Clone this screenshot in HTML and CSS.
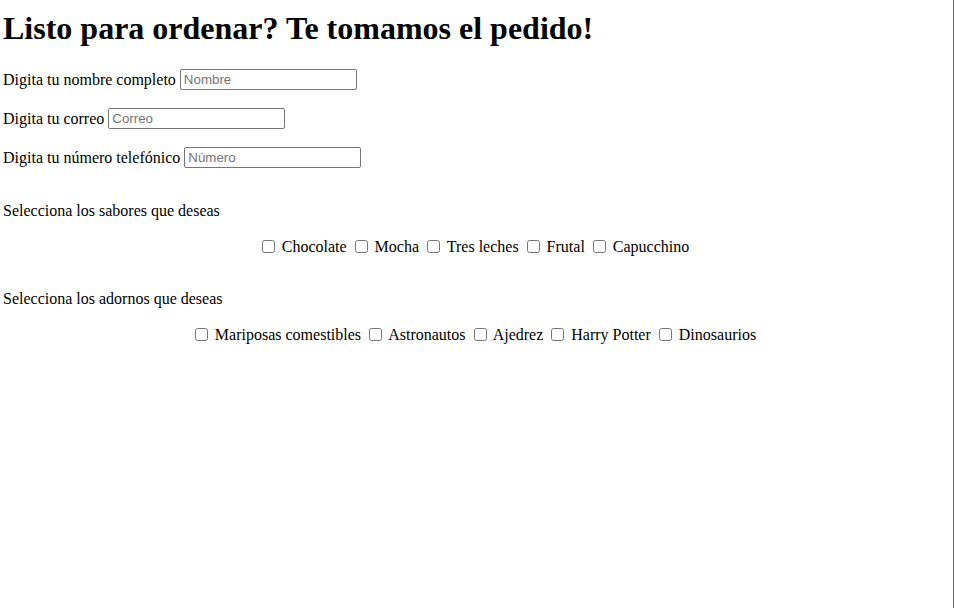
FILE: index.html
```html
<!DOCTYPE html>
<html lang="es">
<head>
<meta charset="utf-8">
<title>Pedido</title>
<link rel="stylesheet" href="styles.css">
</head>
<body>
<div class="page">
  <h1 class="title">Listo para ordenar? Te tomamos el pedido!</h1>
  <form class="form">
    <div class="field"><span class="field-label">Digita tu nombre completo</span><input class="text-input" type="text" placeholder="Nombre"></div>
    <div class="field"><span class="field-label">Digita tu correo</span><input class="text-input" type="text" placeholder="Correo"></div>
    <div class="field"><span class="field-label">Digita tu número telefónico</span><input class="text-input" type="text" placeholder="Número"></div>

    <p class="section-label section-first">Selecciona los sabores que deseas</p>
    <div class="options options-first">
      <input type="checkbox" class="check"> Chocolate
      <input type="checkbox" class="check"> Mocha
      <input type="checkbox" class="check"> Tres leches
      <input type="checkbox" class="check"> Frutal
      <input type="checkbox" class="check"> Capucchino
    </div>

    <p class="section-label section-second">Selecciona los adornos que deseas</p>
    <div class="options options-second">
      <input type="checkbox" class="check"> Mariposas comestibles
      <input type="checkbox" class="check"> Astronautos
      <input type="checkbox" class="check"> Ajedrez
      <input type="checkbox" class="check"> Harry Potter
      <input type="checkbox" class="check"> Dinosaurios
    </div>
  </form>
</div>
</body>
</html>
```

FILE: styles.css
```css
html, body {
  margin: 0;
  padding: 0;
  background: #ffffff;
}

body {
  font-family: "Liberation Serif", "Times New Roman", serif;
  font-size: 16px;
  color: #000000;
}

.page {
  box-sizing: border-box;
  width: 954px;
  height: 608px;
  padding: 10px 3px 0 3px;
  border-right: 1px solid #707070;
}

.title {
  margin: 0;
  font-size: 32px;
  font-weight: bold;
  line-height: 37px;
}

.form {
  margin-top: 22px;
  display: flex;
  flex-direction: column;
}

.field {
  display: flex;
  align-items: center;
  gap: 4px;
  height: 21px;
  line-height: 21px;
  margin-bottom: 18px;
}

.field:last-of-type {
  margin-bottom: 0;
}

.text-input {
  box-sizing: border-box;
  width: 177px;
  height: 21px;
  padding: 1px 3px;
  border: 1px solid #767676;
  border-radius: 2px;
  font-family: "Liberation Sans", Arial, sans-serif;
  font-size: 13.33px;
  margin: 0;
}

.text-input::placeholder {
  color: #757575;
}

.section-label {
  font-size: 16px;
  line-height: 21px;
  margin: 0;
}

.section-first {
  margin-top: 14px;
}

.section-second {
  margin-top: 31px;
}

.options {
  text-align: center;
  line-height: 21px;
  padding-right: 6px;
}

.options-first {
  margin-top: 15px;
}

.options-second {
  margin-top: 15px;
}

.check {
  width: 13px;
  height: 13px;
  margin: 3px 3px 3px 4px;
  vertical-align: -1px;
}
```
